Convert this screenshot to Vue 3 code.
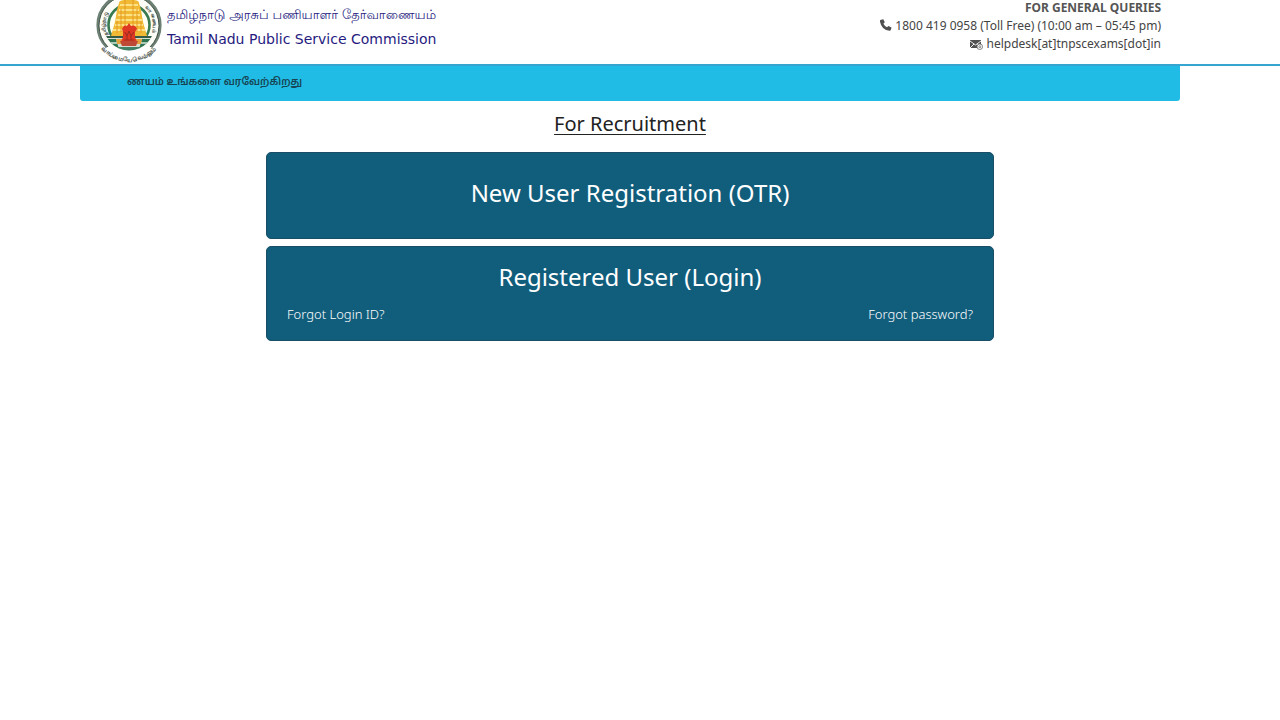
<script setup>
const helpLinks = ['Forgot Login ID?', 'Forgot password?']
</script>

<template>
  <div class="page">
    <header class="top">
      <div class="wrap top-row">
        <a class="brand" href="#">
          <svg class="emblem" viewBox="0 0 70 76" role="img" aria-label="Government of Tamil Nadu emblem">
            <defs>
              <path id="ring-left" d="M13.6 48A23.6 23.6 0 0 1 23 17.8" />
              <path id="ring-right" d="M51 20.6A23.6 23.6 0 0 1 57 47" />
              <path id="ring-bottom" d="M4 57A36 36 0 0 0 66 57" />
              <clipPath id="disc"><circle cx="35" cy="38" r="25.5" /></clipPath>
            </defs>
            <path d="M13 60A31 31 0 1 1 57 60" fill="#fff" stroke="#6c8074" stroke-width="3.2" />
            <path d="M14 60A30 30 0 1 1 56 60" fill="#fcfdf7" stroke="#35463b" stroke-width=".9" />
            <circle cx="35" cy="38" r="20.5" fill="#fffff2" stroke="#397a50" stroke-width="2.6" />
            <g clip-path="url(#disc)">
              <path d="M27 9h16l4 14 2 12 4 14H17l4-14 2-12z" fill="#f1b934" />
              <path d="M26 18h18M25 23h20M24 28h22M22 33h26M21 38h28M19 43h32" stroke="#fff0a0" stroke-width="1.4" />
              <path d="M31 12v33M39 12v33M27 22v23M43 22v23M23 34v12M47 34v12" stroke="#e39a24" stroke-width="1" />
              <path d="M8 49h54v16H8z" fill="#d4ded1" />
              <path d="M8 49h54v2H8z" fill="#365a48" />
              <path d="M10 52h12l3 10H10zM48 52h12v10H45z" fill="#2f7350" />
              <path d="M22 52h7v5h-6zM41 52h7l-1 5h-6z" fill="#e7a33b" />
              <path d="M14 56h9M47 56h9" stroke="#d6e7d6" stroke-width="1.5" />
              <path d="M24 60h22v4H24z" fill="#418064" />
            </g>
            <path d="M28 42q2-5 5-3l2-3 2 3q4-2 6 3l-2 3v5l2 5H27l2-5v-5z" fill="#df3823" />
            <path d="M31 45l2 4 2-5 2 5 3-4M30 53h10M33 49v4M37 49v4" fill="none" stroke="#9d2d20" stroke-width="1" />
            <path d="M26 54h18l-2 5H28z" fill="#bd4936" />
            <g class="ring-text">
              <text><textPath href="#ring-left">தமிழ்நாடு</textPath></text>
              <text><textPath href="#ring-right">வாணையம்</textPath></text>
              <text class="motto"><textPath href="#ring-bottom" startOffset="50%" text-anchor="middle">வாய்மையே வெல்லும்</textPath></text>
            </g>
          </svg>
          <span class="names">
            <span class="tamil" lang="ta">தமிழ்நாடு அரசுப் பணியாளர் தேர்வாணையம்</span>
            <span class="english">Tamil Nadu Public Service Commission</span>
          </span>
        </a>
        <address class="contact">
          <strong>FOR GENERAL QUERIES</strong>
          <span>
            <svg class="phone" viewBox="0 0 12 12" aria-hidden="true"><path d="M1.1.8 3.3.2l1.5 3-1.4 1.5q1.2 2.4 3.6 3.6l1.5-1.4 3 1.7-.7 2.4q-.3.8-1.2.8Q1.4 11-.1 2.1-.1 1.1 1.1.8z" /></svg>
            1800 419 0958 (Toll Free) (10:00 am – 05:45 pm)
          </span>
          <span>
            <svg class="mail" viewBox="0 0 13 11" aria-hidden="true">
              <path d="M0 1h11v8H0z" />
              <path d="M0 2l5.5 4L11 2M0 9l4-4M11 9L7 5" fill="none" stroke="#fff" stroke-width=".9" />
              <circle cx="9.8" cy="7.7" r="2.8" fill="#fff" stroke="#666" stroke-width=".8" />
              <circle cx="9.8" cy="7.7" r="1" fill="none" stroke="#555" stroke-width=".7" />
            </svg>
            helpdesk[at]tnpscexams[dot]in
          </span>
        </address>
      </div>
    </header>
    <main>
      <div class="wrap notice" lang="ta"><p>ணயம் உங்களை வரவேற்கிறது</p></div>
      <section class="recruitment">
        <h1>For Recruitment</h1>
        <div class="card register"><a class="action" href="#">New User Registration (OTR)</a></div>
        <div class="card login">
          <a class="action" href="#">Registered User (Login)</a>
          <div class="help"><a v-for="label in helpLinks" :key="label" href="#">{{ label }}</a></div>
        </div>
      </section>
    </main>
  </div>
</template>

<style>
body { margin: 0; background: #fff; }
</style>

<style scoped>
.page { font-family: "Noto Sans", "Noto Sans Tamil", sans-serif; color: #222; }
.page * { box-sizing: border-box; }
a { color: inherit; text-decoration: none; }
.top { height: 66px; border-bottom: 2px solid #36a6d0; overflow: hidden; padding-right: 20px; }
.wrap { width: calc(100% - 160px); max-width: 1100px; margin: 0 auto; }
.top-row { display: flex; justify-content: space-between; padding: 0 19px 0 14px; }
.brand { display: flex; gap: 3px; color: #261b80; }
.emblem { width: 70px; height: 76px; margin-top: -13px; flex: none; }
.ring-text { font: bold 5px "Noto Sans", sans-serif; fill: #3c493d; }
.motto { font-size: 6px; }
.names { display: flex; flex-direction: column; padding-top: 4px; white-space: nowrap; }
.tamil { font: 13px/24px "Lohit Tamil", "FreeSerif", "Noto Serif Tamil", "Noto Sans Tamil", sans-serif; }
.english { font: 14px/22px "DejaVu Sans", sans-serif; }
.contact { display: flex; flex-direction: column; align-items: flex-end; font-style: normal; font-size: 12px; line-height: 18px; color: #444; margin-top: -1px; white-space: nowrap; }
.contact strong { color: #555; }
.contact svg { fill: #505050; }
.contact .phone { width: 12px; height: 12px; vertical-align: -1px; }
.contact .mail { width: 13px; height: 11px; vertical-align: -2px; }
main { padding-right: 20px; }
.notice { background: #20bce5; border-radius: 0 0 3px 3px; padding: 5px 47px 10px; font-size: 10px; line-height: 20px; color: #174553; font-weight: 600; }
.notice p { margin: 0; }
.recruitment { width: calc(100% - 40px); max-width: 728px; margin: 0 auto; padding-top: 9px; }
h1 { margin: 0 0 14px; font-size: 20px; line-height: 28px; font-weight: 400; text-align: center; text-decoration: underline; text-decoration-thickness: 1px; text-underline-offset: 3px; }
.card { background: #115d7c; border: 1px solid #194f66; border-radius: 5px; color: #fff; text-align: center; }
.register { padding: 22px 20px 27px; margin-bottom: 7px; }
.login { padding: 12px 20px 16px; }
.action { display: block; font-size: 24px; line-height: 36px; }
.help { display: flex; justify-content: space-between; padding-top: 9px; font-size: 13px; line-height: 20px; font-weight: 300; }
</style>
